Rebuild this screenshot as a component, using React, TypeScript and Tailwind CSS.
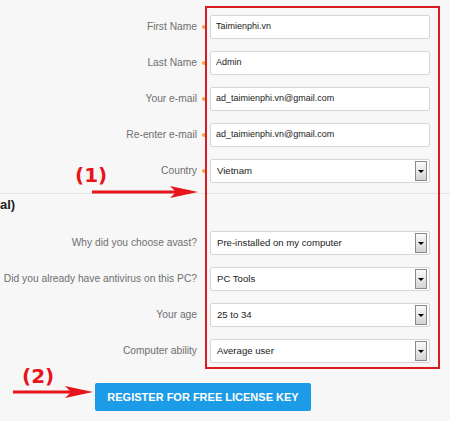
import type { ReactNode } from 'react';

const font = { fontFamily: '"Liberation Sans", Arial, sans-serif' };

function Row({ label, required, children }: { label: string; required?: boolean; children: ReactNode }) {
  return (
    <div className="flex h-6 items-center">
      <div className="w-[197px] shrink-0 whitespace-nowrap text-right text-[10.25px] text-[#6f6f6f]">{label}</div>
      <div className="flex w-[13px] shrink-0 justify-center">
        {required && <span className="block h-[4px] w-[4px] rounded-full bg-[#f6a33a]" />}
      </div>
      <div className="h-6 w-[220px] shrink-0">{children}</div>
    </div>
  );
}

function TextInput({ value }: { value: string }) {
  return (
    <div className="flex h-full items-center rounded-[2px] border border-[#d6d6d6] bg-white pl-[5px] text-[9px] text-[#222]">
      {value}
    </div>
  );
}

function Select({ value }: { value: string }) {
  return (
    <div className="flex h-full items-center justify-between rounded-[2px] border border-[#d6d6d6] bg-white pl-[6px] pr-[2px] text-[9.6px] text-[#222]">
      <span>{value}</span>
      <span className="flex h-[20px] w-[12px] items-center justify-center border border-[#8a8a8a] bg-gradient-to-b from-[#fafafa] to-[#d4d4d4]">
        <span className="h-0 w-0 border-x-[3px] border-t-[3px] border-x-transparent border-t-black" />
      </span>
    </div>
  );
}

function Arrow({ width }: { width: number }) {
  return (
    <svg width={width} height="14" viewBox={`0 0 ${width} 14`}>
      <line x1="0" y1="7" x2={width - 22} y2="7" stroke="#e8141b" strokeWidth="3" />
      <polygon points={`${width - 28},1 ${width},7 ${width - 28},13 ${width - 22},7`} fill="#e8141b" />
    </svg>
  );
}

export default function App() {
  return (
    <div className="relative h-[421px] w-[450px] overflow-hidden bg-[#f7f7f7]" style={font}>
      <div className="flex flex-col gap-3 pt-[15px]">
        <Row label="First Name" required>
          <TextInput value="Taimienphi.vn" />
        </Row>
        <Row label="Last Name" required>
          <TextInput value="Admin" />
        </Row>
        <Row label="Your e-mail" required>
          <TextInput value="ad_taimienphi.vn@gmail.com" />
        </Row>
        <Row label="Re-enter e-mail" required>
          <TextInput value="ad_taimienphi.vn@gmail.com" />
        </Row>
        <Row label="Country" required>
          <Select value="Vietnam" />
        </Row>
      </div>

      <div className="mt-[10px] border-t border-[#e6e6e6] pt-[3px]">
        <div className="h-4 text-[13px] font-bold leading-4 text-[#222]">al)</div>
      </div>

      <div className="mt-[18px] flex flex-col gap-3">
        <Row label="Why did you choose avast?">
          <Select value="Pre-installed on my computer" />
        </Row>
        <Row label="Did you already have antivirus on this PC?">
          <Select value="PC Tools" />
        </Row>
        <Row label="Your age">
          <Select value="25 to 34" />
        </Row>
        <Row label="Computer ability">
          <Select value="Average user" />
        </Row>
      </div>

      <div className="mt-5 pl-[95px]">
        <button className="h-[28px] w-[216px] rounded-[2px] bg-[#1c9be6] text-[11px] font-bold text-white">
          REGISTER FOR FREE LICENSE KEY
        </button>
      </div>

      {/* annotations */}
      <div className="absolute left-[205px] top-[6px] h-[363px] w-[235px] border-2 border-[#d91c24]" />
      <div className="absolute left-[75px] top-[160px] text-[20px] font-bold text-[#e8141b]" style={{ fontFamily: '"DejaVu Sans", sans-serif' }}>
        (1)
      </div>
      <div className="absolute left-[92px] top-[185px]">
        <Arrow width={106} />
      </div>
      <div className="absolute left-[22px] top-[361px] text-[20px] font-bold text-[#e8141b]" style={{ fontFamily: '"DejaVu Sans", sans-serif' }}>
        (2)
      </div>
      <div className="absolute left-[13px] top-[385px]">
        <Arrow width={80} />
      </div>
    </div>
  );
}
